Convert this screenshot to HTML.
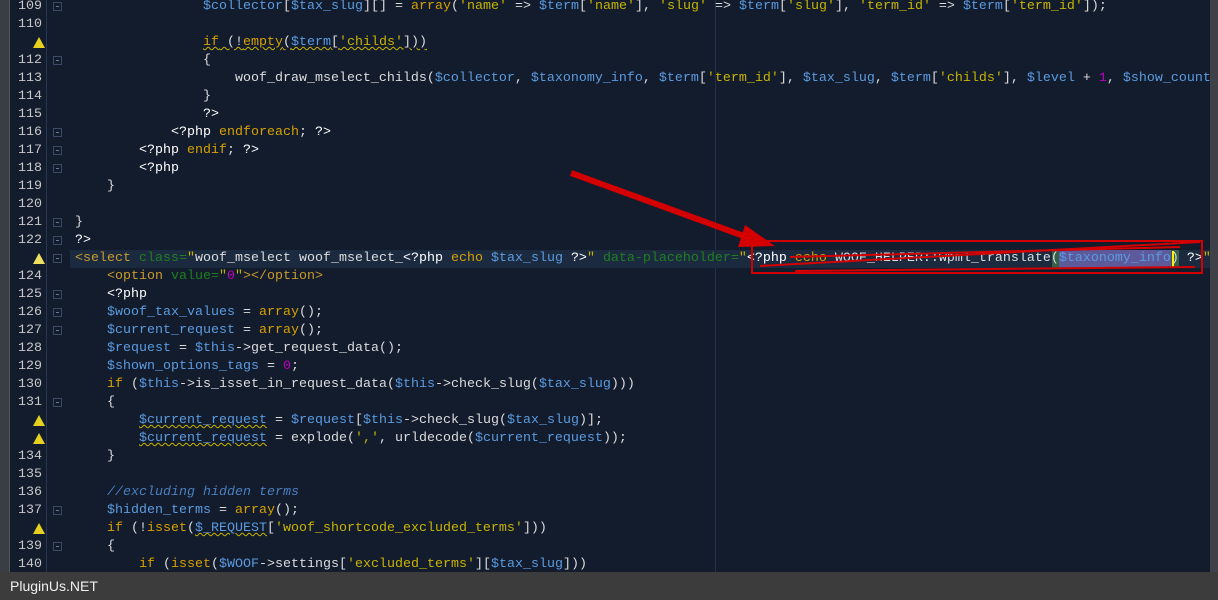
<!DOCTYPE html>
<html><head><meta charset="utf-8"><style>
body{margin:0;width:1218px;height:600px;overflow:hidden;background:#131c2d;font-family:"Liberation Mono",monospace;position:relative}
#lstrip{position:absolute;left:0;top:0;width:9px;height:572px;background:#3a3d42;border-right:1px solid #555}
#gut{position:absolute;left:10px;top:0;width:36px;height:572px;border-right:1px solid #2a3650}
#code{position:absolute;left:0;top:-2px;width:1210px}
.l{position:relative;height:18px;line-height:18px;font-size:13.33px;white-space:pre;color:#dcdcdc}
.n{position:absolute;left:0;width:42px;text-align:right;color:#c8c8c8}
.f{position:absolute;left:53px;top:4px;width:9px;height:9px;border:1px solid #3a4a66;box-sizing:border-box}
.f:after{content:"";position:absolute;left:2px;top:3px;width:3px;height:1px;background:#6a7a96}
.t{position:absolute;left:75px}
.w{position:absolute;left:33px;top:3px;width:0;height:0;border-left:6px solid transparent;border-right:6px solid transparent;border-bottom:11px solid #e8d020}
.v{color:#5b9be0}.k{color:#d7a000}.s{color:#c8b400}.m{color:#c000c0}.g{color:#1f7f1f}.h{color:#c89a2a}.c{color:#4a7fc0;font-style:italic}.b{color:#fff}
.u{text-decoration:underline wavy #c8b400;text-decoration-thickness:1px}
#hl{position:absolute;left:70px;top:250px;width:1140px;height:18px;background:#1c2a40}
#sb{position:absolute;left:1210px;top:0;width:8px;height:572px;background:#3e4248}
#bar{position:absolute;left:0;top:572px;width:1218px;height:28px;background:#3c3c3c;color:#f0f0f0;font-family:"Liberation Sans",sans-serif;font-size:14px;line-height:28px;padding-left:10px;box-sizing:border-box}
#vl{position:absolute;left:715px;top:0;width:1px;height:572px;background:#243049}
</style></head><body>
<div id="lstrip"></div><div id="gut"></div><div id="vl"></div><div id="hl"></div>
<div style="position:absolute;left:1052px;top:250px;width:7px;height:18px;background:#356048"></div>
<div style="position:absolute;left:1059px;top:250px;width:112px;height:18px;background:#5d5a9c"></div>
<div style="position:absolute;left:1171px;top:250px;width:8px;height:18px;background:#356048"></div>
<div style="position:absolute;left:1172px;top:251px;width:2px;height:16px;background:#ffef00"></div>
<div id="code">
<div class="l"><span class="n">109</span><span class="f"></span><span class="t">                <span class="v">$collector</span>[<span class="v">$tax_slug</span>][] = <span class="k">array</span>(<span class="s">'name'</span> =&gt; <span class="v">$term</span>[<span class="s">'name'</span>], <span class="s">'slug'</span> =&gt; <span class="v">$term</span>[<span class="s">'slug'</span>], <span class="s">'term_id'</span> =&gt; <span class="v">$term</span>[<span class="s">'term_id'</span>]);</span></div>
<div class="l"><span class="n">110</span></div>
<div class="l"><span class="w"></span><span class="t">                <span class="k u">if</span><span class="u"> (!</span><span class="k u">empty</span><span class="u">(</span><span class="v u">$term</span><span class="u">[</span><span class="s u">'childs'</span><span class="u">]))</span></span></div>
<div class="l"><span class="n">112</span><span class="f"></span><span class="t">                {</span></div>
<div class="l"><span class="n">113</span><span class="t">                    woof_draw_mselect_childs(<span class="v">$collector</span>, <span class="v">$taxonomy_info</span>, <span class="v">$term</span>[<span class="s">'term_id'</span>], <span class="v">$tax_slug</span>, <span class="v">$term</span>[<span class="s">'childs'</span>], <span class="v">$level</span> + <span class="m">1</span>, <span class="v">$show_count</span></span></div>
<div class="l"><span class="n">114</span><span class="t">                }</span></div>
<div class="l"><span class="n">115</span><span class="t">                <span class="b">?&gt;</span></span></div>
<div class="l"><span class="n">116</span><span class="f"></span><span class="t">            <span class="b">&lt;?php</span> <span class="k">endforeach</span>; <span class="b">?&gt;</span></span></div>
<div class="l"><span class="n">117</span><span class="f"></span><span class="t">        <span class="b">&lt;?php</span> <span class="k">endif</span>; <span class="b">?&gt;</span></span></div>
<div class="l"><span class="n">118</span><span class="f"></span><span class="t">        <span class="b">&lt;?php</span></span></div>
<div class="l"><span class="n">119</span><span class="t">    }</span></div>
<div class="l"><span class="n">120</span></div>
<div class="l"><span class="n">121</span><span class="f"></span><span class="t">}</span></div>
<div class="l"><span class="n">122</span><span class="f"></span><span class="t"><span class="b">?&gt;</span></span></div>
<div class="l"><span class="w" style="border-bottom-color:#f0e060"></span><span class="f"></span><span class="t"><span class="h">&lt;select</span> <span class="g">class=</span><span class="s">"</span>woof_mselect woof_mselect_<span class="b">&lt;?php</span> <span class="k">echo</span> <span class="v">$tax_slug</span> <span class="b">?&gt;</span><span class="s">"</span> <span class="g">data-placeholder=</span><span class="s">"</span><span class="b">&lt;?php</span> <span class="k">echo</span> WOOF_HELPER::wpml_translate(<span class="v">$taxonomy_info</span>) <span class="b">?&gt;</span><span class="s">"</span></span></div>
<div class="l"><span class="n">124</span><span class="t">    <span class="h">&lt;option</span> <span class="g">value=</span><span class="s">"</span><span class="m">0</span><span class="s">"</span><span class="h">&gt;&lt;/option&gt;</span></span></div>
<div class="l"><span class="n">125</span><span class="f"></span><span class="t">    <span class="b">&lt;?php</span></span></div>
<div class="l"><span class="n">126</span><span class="f"></span><span class="t">    <span class="v">$woof_tax_values</span> = <span class="k">array</span>();</span></div>
<div class="l"><span class="n">127</span><span class="f"></span><span class="t">    <span class="v">$current_request</span> = <span class="k">array</span>();</span></div>
<div class="l"><span class="n">128</span><span class="t">    <span class="v">$request</span> = <span class="v">$this</span>-&gt;get_request_data();</span></div>
<div class="l"><span class="n">129</span><span class="t">    <span class="v">$shown_options_tags</span> = <span class="m">0</span>;</span></div>
<div class="l"><span class="n">130</span><span class="t">    <span class="k">if</span> (<span class="v">$this</span>-&gt;is_isset_in_request_data(<span class="v">$this</span>-&gt;check_slug(<span class="v">$tax_slug</span>)))</span></div>
<div class="l"><span class="n">131</span><span class="f"></span><span class="t">    {</span></div>
<div class="l"><span class="w"></span><span class="t">        <span class="v u">$current_request</span> = <span class="v">$request</span>[<span class="v">$this</span>-&gt;check_slug(<span class="v">$tax_slug</span>)];</span></div>
<div class="l"><span class="w"></span><span class="t">        <span class="v u">$current_request</span> = explode(<span class="s">','</span>, urldecode(<span class="v">$current_request</span>));</span></div>
<div class="l"><span class="n">134</span><span class="t">    }</span></div>
<div class="l"><span class="n">135</span></div>
<div class="l"><span class="n">136</span><span class="t">    <span class="c">//excluding hidden terms</span></span></div>
<div class="l"><span class="n">137</span><span class="f"></span><span class="t">    <span class="v">$hidden_terms</span> = <span class="k">array</span>();</span></div>
<div class="l"><span class="w"></span><span class="t">    <span class="k">if</span> (!<span class="k">isset</span>(<span class="v u">$_REQUEST</span>[<span class="s">'woof_shortcode_excluded_terms'</span>]))</span></div>
<div class="l"><span class="n">139</span><span class="f"></span><span class="t">    {</span></div>
<div class="l"><span class="n">140</span><span class="t">        <span class="k">if</span> (<span class="k">isset</span>(<span class="v">$WOOF</span>-&gt;settings[<span class="s">'excluded_terms'</span>][<span class="v">$tax_slug</span>]))</span></div>
</div>
<div id="sb"></div>
<svg style="position:absolute;left:0;top:0" width="1218" height="572">
<g stroke="#d40000" fill="none" stroke-width="2">
<rect x="752" y="241" width="450" height="32"/>
<line x1="760" y1="266" x2="1200" y2="242"/>
<line x1="790" y1="257" x2="1180" y2="247"/>
<line x1="795" y1="271" x2="1195" y2="267"/>
</g>
<line x1="571" y1="173" x2="752" y2="239" stroke="#d40000" stroke-width="6"/>
<polygon points="775,246 745,225 738,247" fill="#d40000"/>
</svg>
<div id="bar">PluginUs.NET</div>
</body></html>
